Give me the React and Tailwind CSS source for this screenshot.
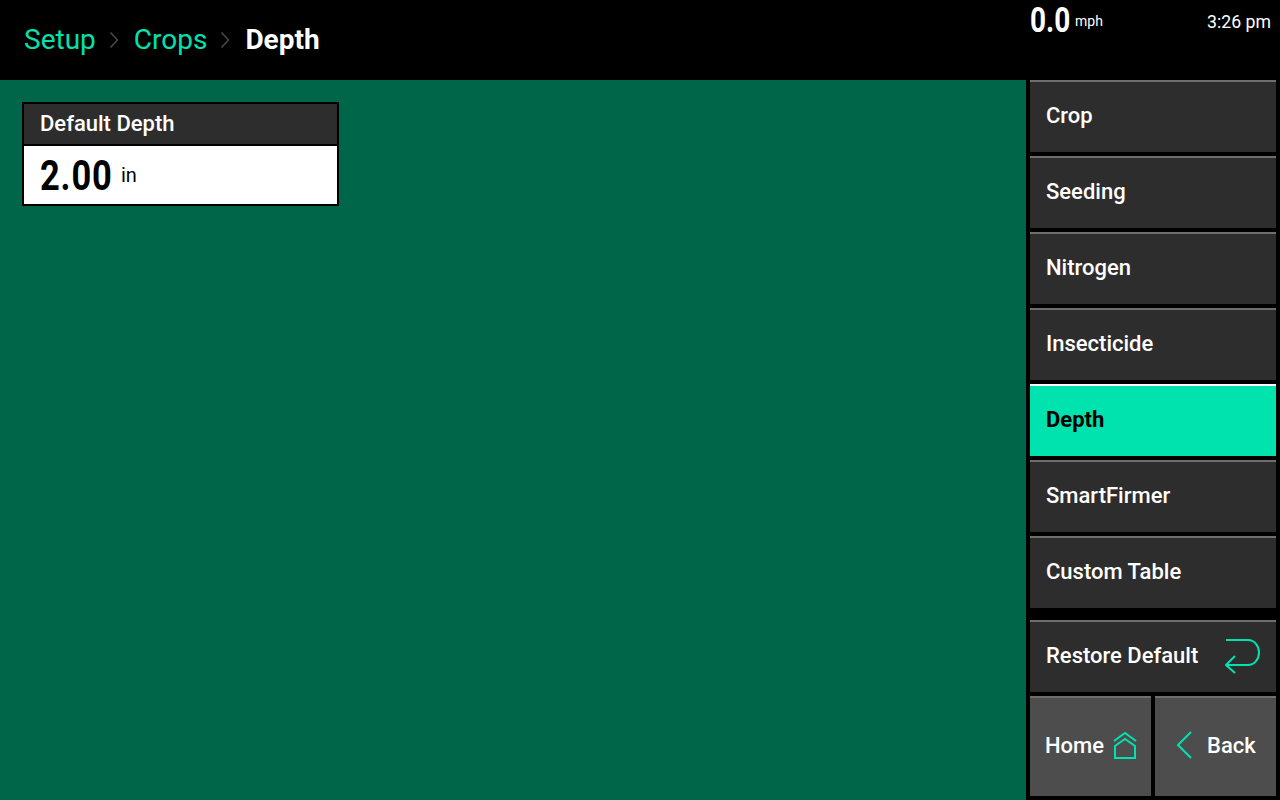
const menu = ['Crop', 'Seeding', 'Nitrogen', 'Insecticide', 'Depth', 'SmartFirmer', 'Custom Table'];

function Chevron() {
  return (
    <svg width="10" height="18" viewBox="0 0 10 18" fill="none" stroke="#4a4a4a" strokeWidth="1.5">
      <path d="M1.5 1.5 8.5 9l-7 7.500" />
    </svg>
  );
}

function MenuButton({ label }) {
  const active = label === 'Depth';
  return (
    <button
      className={
        active
          ? 'h-[72px] w-full border-t-2 border-white bg-[#00e3ae] pb-1 pl-4 text-left text-[22px] font-bold text-black'
          : 'h-[72px] w-full border-t-2 border-[#6e6e6e] bg-[#2d2d2d] pb-1 pl-4 text-left text-[22px] font-[480] text-white'
      }
    >
      {label}
    </button>
  );
}

export default function App() {
  return (
    <div className="flex h-[800px] w-[1280px] flex-col overflow-hidden bg-black font-['Roboto',sans-serif]">
      {/* top bar */}
      <header className="flex h-20 shrink-0 bg-black">
        <nav className="flex flex-1 items-center pl-6 text-[28px]">
          <span className="text-[#00e3ae]">Setup</span>
          <span className="ml-[13px] mr-[15px]"><Chevron /></span>
          <span className="text-[#00e3ae]">Crops</span>
          <span className="ml-[13px] mr-[15px]"><Chevron /></span>
          <span className="font-bold text-white">Depth</span>
        </nav>
        <div className="flex w-[250px] items-start justify-between pr-[9px] text-white">
          <div className="flex items-start">
            <span className="inline-block w-[42px] origin-left scale-x-[0.8] whitespace-nowrap text-[35px] font-bold leading-[42px]">0.0</span>
            <span className="ml-[3px] mt-[13px] text-sm leading-4">mph</span>
          </div>
          <span className="mt-[10px] text-[17.7px] leading-6">3:26 pm</span>
        </div>
      </header>

      <div className="flex flex-1">
        {/* main area */}
        <main className="w-[1026px] bg-[#00664a] pl-[22px] pt-[22px]">
          <div className="w-[317px] border-2 border-black">
            <div className="flex h-[42px] items-center border-b-2 border-black bg-[#2d2d2d] pb-px pl-4 text-[22px] font-[480] text-white">
              Default Depth
            </div>
            <div className="flex h-[58px] items-center bg-white pl-4 text-black">
              <span className="mt-px inline-block w-[72px] origin-left scale-x-[0.82] whitespace-nowrap text-[42px] font-bold leading-none tracking-[1px]">2.00</span>
              <span className="ml-[9px] text-xl">in</span>
            </div>
          </div>
        </main>

        {/* side menu */}
        <aside className="flex w-[254px] flex-col px-1">
          <div className="flex flex-col gap-1">
            {menu.map((label) => (
              <MenuButton key={label} label={label} />
            ))}
          </div>
          <button className="mt-3 flex h-[72px] w-full items-center justify-between border-t-2 border-[#6e6e6e] bg-[#2d2d2d] pl-4 pr-4 text-[22px] font-[480] text-white">
            <span className="mb-1">Restore Default</span>
            <svg className="mb-[2px]" width="35" height="36" viewBox="0 0 35 36" fill="none" stroke="#00e3ae" strokeWidth="2">
              <path d="M1 2h22a11 12.500 0 0 1 0 25H1" />
              <path d="m10 18-9 9 9 8" />
            </svg>
          </button>
          <div className="mt-1 flex gap-1">
            <button className="flex h-[100px] w-[121px] items-center border-t-2 border-[#6e6e6e] bg-[#4d4d4d] pb-1 pl-[15px] text-[22px] font-[480] text-white">
              Home
              <svg className="ml-[9px]" width="24" height="28" viewBox="0 0 24 28" fill="none" stroke="#00e3ae" strokeWidth="2">
                <path d="m1 10 11-8 11 8" />
                <path d="M2 27V15l10-7 10 7v12z" />
              </svg>
            </button>
            <button className="flex h-[100px] w-[121px] items-center border-t-2 border-[#6e6e6e] bg-[#4d4d4d] pb-1 pl-[22px] text-[22px] font-[480] text-white">
              <svg width="16" height="28" viewBox="0 0 16 28" fill="none" stroke="#00e3ae" strokeWidth="2">
                <path d="M14 1 1 14l13 13" />
              </svg>
              <span className="ml-[14px]">Back</span>
            </button>
          </div>
        </aside>
      </div>
    </div>
  );
}
